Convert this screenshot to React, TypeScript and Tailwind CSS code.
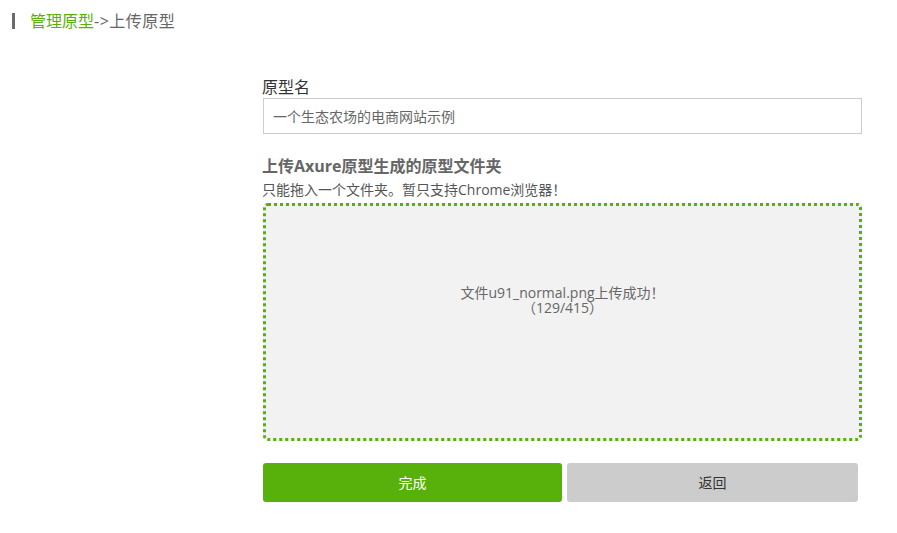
export default function App() {
  const font = { fontFamily: '"Open Sans", "Noto Sans CJK SC", sans-serif' };
  return (
    <div className="w-[897px] h-[533px] bg-white text-[#333]" style={font}>
      <div className="pt-[13px] pl-[12px]">
        <div className="flex items-center h-[16px]">
          <span className="w-[3px] h-[16px] bg-[#6b6b6b]" />
          <span className="ml-[15px] text-[16px] text-[#58b00a] leading-none">管理原型</span>
          <span className="text-[16px] text-[#666] leading-none tracking-[0.5px]">-&gt;上传原型</span>
        </div>
      </div>

      <div className="ml-[263px] w-[599px] pt-[48px]">
        <div className="text-[16px] text-[#333] leading-[20px] -ml-px">原型名</div>
        <div className="mt-[1px] h-[36px] border border-[#cccccc] flex items-center pl-[9px] text-[14px] text-[#666]">
          一个生态农场的电商网站示例
        </div>

        <div className="mt-[22px] text-[16px] font-bold text-[#666] leading-[20px] -ml-px">
          上传Axure原型生成的原型文件夹
        </div>
        <div className="mt-[5px] text-[14px] text-[#555] leading-[18px] -ml-px">
          只能拖入一个文件夹。暂只支持Chrome浏览器！
        </div>

        <div className="mt-[4px] h-[238px] bg-[#f2f2f2] border-[3px] border-dotted border-[#58b00a] rounded-[5px] flex flex-col items-center pt-[79px] text-[14px] text-[#666] leading-[15px]">
          <div>文件u91_normal.png上传成功！</div>
          <div>（129/415）</div>
        </div>

        <div className="mt-[22px] flex gap-[5px]">
          <button className="w-[299px] h-[39px] bg-[#58b00a] rounded-[3px] text-white text-[14px]">完成</button>
          <button className="w-[291px] h-[39px] bg-[#cccccc] rounded-[3px] text-[#333] text-[14px]">返回</button>
        </div>
      </div>
    </div>
  );
}
